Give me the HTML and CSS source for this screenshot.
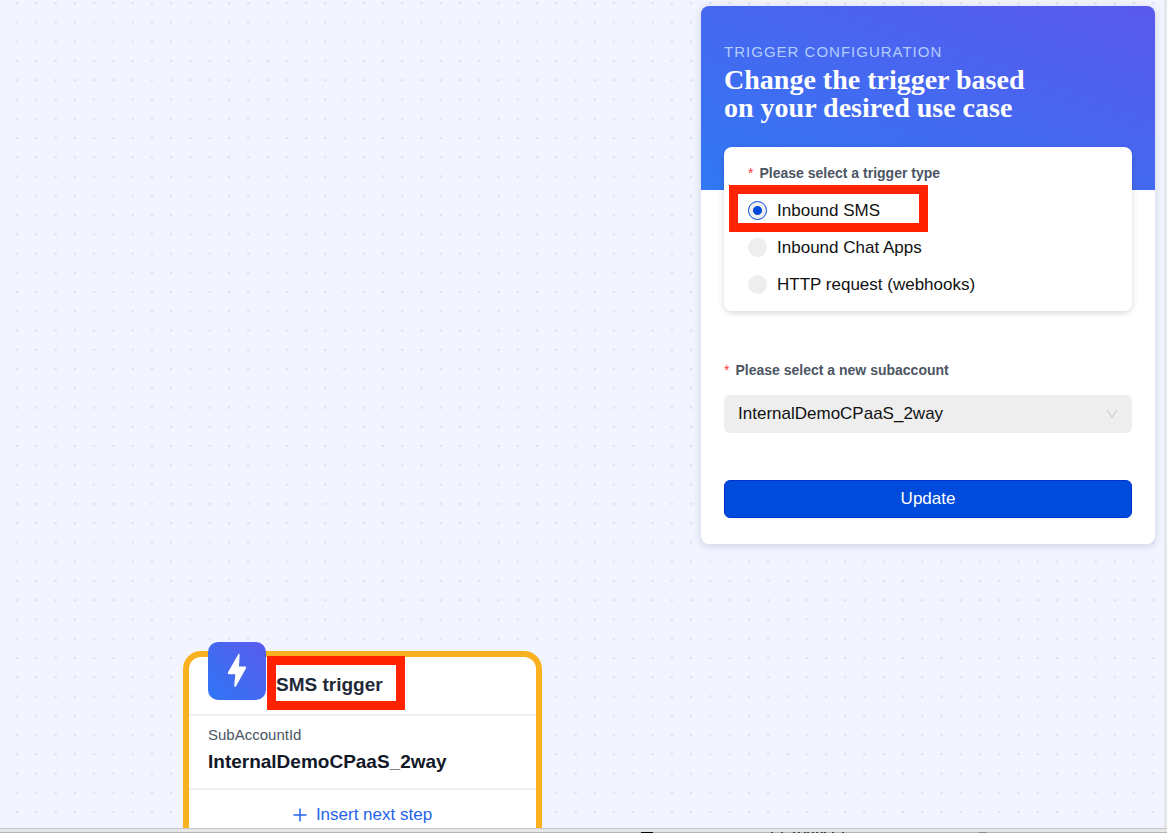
FILE: index.html
```html
<!DOCTYPE html>
<html lang="en">
<head>
    <meta charset="UTF-8">
    <meta name="viewport" content="width=device-width, initial-scale=1.0">
    <title>Trigger Configuration</title>
    <link rel="stylesheet" href="styles.css">
</head>
<body>

<main class="canvas">
    <svg class="canvas-dots" width="100%" height="100%" aria-hidden="true">
        <defs>
            <pattern id="dots" width="16" height="16" patternUnits="userSpaceOnUse" patternTransform="translate(7.5 -6.5) scale(1.2036)">
                <circle cx="8" cy="8" r="1.1" fill="#dadefd"/>
            </pattern>
        </defs>
        <rect width="100%" height="100%" fill="url(#dots)"/>
    </svg>

    <article class="node">
        <header class="node-header">
            <span class="node-icon">
                <svg width="58" height="58" viewBox="0 0 58 58" aria-hidden="true">
                    <path d="M30.500 12 Q31.800 11.200 31.600 13 L31 24.500 H37.300 Q38.800 24.700 38 26.300 L28.200 44 Q26.500 46 26.200 43.700 L27.300 32.300 H21 Q19.200 32 20 30.300 Z" fill="#fff"/>
                </svg>
            </span>
            <h2 class="node-title">SMS trigger</h2>
            <span class="highlight highlight-title"></span>
        </header>
        <div class="node-body">
            <p class="node-label">SubAccountId</p>
            <p class="node-value">InternalDemoCPaaS_2way</p>
        </div>
        <button type="button" class="node-insert">
            <svg width="14" height="14" viewBox="0 0 14 14" aria-hidden="true">
                <path d="M7 0.500V13.500M0.500 7H13.500" stroke="currentColor" stroke-width="1.500"/>
            </svg>
            Insert next step
        </button>
    </article>

    <aside class="panel">
        <header class="panel-header">
            <p class="panel-tag">Trigger configuration</p>
            <h1 class="panel-title">Change the trigger based<br>on your desired use case</h1>
        </header>
        <form class="panel-form">
            <fieldset class="trigger-card">
                <legend class="field-label"><span class="required">*</span>Please select a trigger type</legend>
                <div class="options">
                    <label class="option">
                        <input type="radio" name="trigger" value="sms" checked>
                        Inbound SMS
                        <span class="highlight highlight-option"></span>
                    </label>
                    <label class="option">
                        <input type="radio" name="trigger" value="chat" disabled>
                        Inbound Chat Apps
                    </label>
                    <label class="option">
                        <input type="radio" name="trigger" value="http" disabled>
                        HTTP request (webhooks)
                    </label>
                </div>
            </fieldset>

            <label class="field-label subaccount-label" for="subaccount"><span class="required">*</span>Please select a new subaccount</label>
            <div class="select-wrap">
                <select id="subaccount" name="subaccount" disabled>
                    <option>InternalDemoCPaaS_2way</option>
                </select>
                <svg class="chevron" width="12" height="10" viewBox="0 0 12 10" aria-hidden="true">
                    <path d="M1 1L6 8.500L11 1" fill="none" stroke="#cfcfcf" stroke-width="1.200"/>
                </svg>
            </div>

            <button type="submit" class="update">Update</button>
        </form>
    </aside>
</main>

<!-- top edge of the window below -->
<div class="window-edge">
    <svg width="100%" height="1" aria-hidden="true">
        <path d="M641 0.500h12" stroke="#000"/>
        <path d="M771 0.500h2M781 0.500h2M793 0.500h2M798 0.500h2M804 0.500h2M807 0.500h2M812 0.500h2M816 0.500h2M821 0.500h2M824 0.500h2M832 0.500h2M842 0.500h2" stroke="#444"/>
        <path d="M979 0.500h8" stroke="#8a8a8a"/>
    </svg>
</div>

</body>
</html>
```
FILE: styles.css
```css
* {
    box-sizing: border-box;
}
body {
    display: flex;
    flex-direction: column;
    height: 100vh;
    margin: 0;
    overflow: hidden;
    background-color: #e7e7e7;
    font-family: "Liberation Sans", Arial, sans-serif;
    font-size: 16px;
    color: #111;
}
h1, h2, p {
    margin: 0;
}
button, select {
    font: inherit;
}

/* Canvas */
.canvas {
    position: relative;
    flex: 1;
    min-height: 0;
    margin-right: 3px;
    overflow: hidden;
    background-color: #f2f5ff;
}
.canvas-dots {
    display: block;
}
.window-edge {
    display: flex;
    align-items: flex-end;
    height: 5px;
    border-top: 1px solid #c8c9ce;
    background: linear-gradient(#e6e6e6 75%, #b4b4b4 75%);
}

/* Node */
.node {
    position: absolute;
    left: 183px;
    top: 651px;
    width: 359px;
    border: 6px solid #fab120;
    border-radius: 18px;
    background-color: #fff;
}
.node-header {
    position: relative;
    display: flex;
    align-items: center;
    gap: 10px;
    height: 59px;
    padding: 0 19px 2px;
    border-bottom: 2px solid #eeeef3;
}
.node-icon {
    align-self: flex-start;
    height: 58px;
    margin-top: -15px;
    border-radius: 10px;
    background: linear-gradient(45deg, #2f76f5, #5a5bee);
}
.node-title {
    font-size: 19px;
    line-height: 24px;
    color: #1f2937;
}
.node-body {
    padding: 7px 19px 12px;
    border-bottom: 2px solid #eeeef3;
}
.node-label {
    font-size: 15px;
    line-height: 24px;
    color: #4b5563;
}
.node-value {
    font-size: 19px;
    font-weight: bold;
    line-height: 29px;
    color: #111827;
}
.node-insert {
    display: flex;
    align-items: center;
    justify-content: center;
    gap: 9px;
    width: 100%;
    height: 50px;
    border: 0;
    background: none;
    font-size: 17px;
    color: #2563eb;
}

/* Panel */
.panel {
    position: absolute;
    top: 6px;
    right: 9px;
    width: 39%;
    border-radius: 8px;
    background-color: #fff;
    box-shadow: 0 2px 8px rgba(30, 40, 110, 0.18);
}
.panel-header {
    padding: 36px 23px 68px;
    border-radius: 8px 8px 0 0;
    background: linear-gradient(20deg, #3078f5, #5a59ed);
    color: #fff;
}
.panel-tag {
    margin-bottom: 4px;
    font-size: 15px;
    line-height: 20px;
    letter-spacing: 1px;
    text-transform: uppercase;
    color: #b3cdfd;
}
.panel-title {
    font-family: "Liberation Serif", Georgia, serif;
    font-size: 28px;
    line-height: 28px;
}
.panel-form {
    padding: 0 23px 26px;
}
.trigger-card {
    margin: -43px 0 0;
    padding: 16px 24px 8px;
    border: 0;
    border-radius: 8px;
    background-color: #fff;
    box-shadow: 0 2px 6px rgba(0, 0, 0, 0.16);
}
.field-label {
    display: block;
    font-size: 14px;
    font-weight: bold;
    line-height: 20px;
    color: #4b5563;
}
.trigger-card .field-label {
    float: left;
    width: 100%;
    padding: 0;
}
.required {
    margin-right: 6px;
    font-weight: normal;
    color: #ff3b3b;
}
.options {
    clear: both;
    padding-top: 9px;
}
.option {
    position: relative;
    display: flex;
    align-items: center;
    gap: 10px;
    height: 37px;
    font-size: 17px;
}
.option input {
    appearance: none;
    width: 19px;
    height: 19px;
    margin: 0;
    border-radius: 50%;
    background-color: #eee;
}
.option input:checked {
    border: 1px solid #0049dc;
    background: radial-gradient(circle, #0049dc 4px, #eee 5px);
}
.subaccount-label {
    margin-top: 49px;
}
.select-wrap {
    position: relative;
    margin-top: 15px;
}
.select-wrap select {
    appearance: none;
    display: block;
    width: 100%;
    height: 38px;
    padding: 0 40px 2px 14px;
    border: 0;
    border-radius: 6px;
    background-color: #eee;
    font-size: 17px;
    color: #111;
    opacity: 1;
}
.chevron {
    position: absolute;
    top: 14px;
    right: 14px;
}
.update {
    display: block;
    width: 100%;
    height: 38px;
    margin-top: 47px;
    padding: 0;
    border: 1px solid #0033cf;
    border-radius: 6px;
    background-color: #004bdc;
    font-size: 17px;
    color: #fff;
}

/* Red call-out frames */
.highlight {
    position: absolute;
    border: 9px solid #ff2200;
}
.highlight-title {
    top: -1px;
    left: 78px;
    width: 138px;
    height: 54px;
}
.highlight-option {
    top: -7px;
    left: -19px;
    width: 199px;
    height: 47px;
}
```
